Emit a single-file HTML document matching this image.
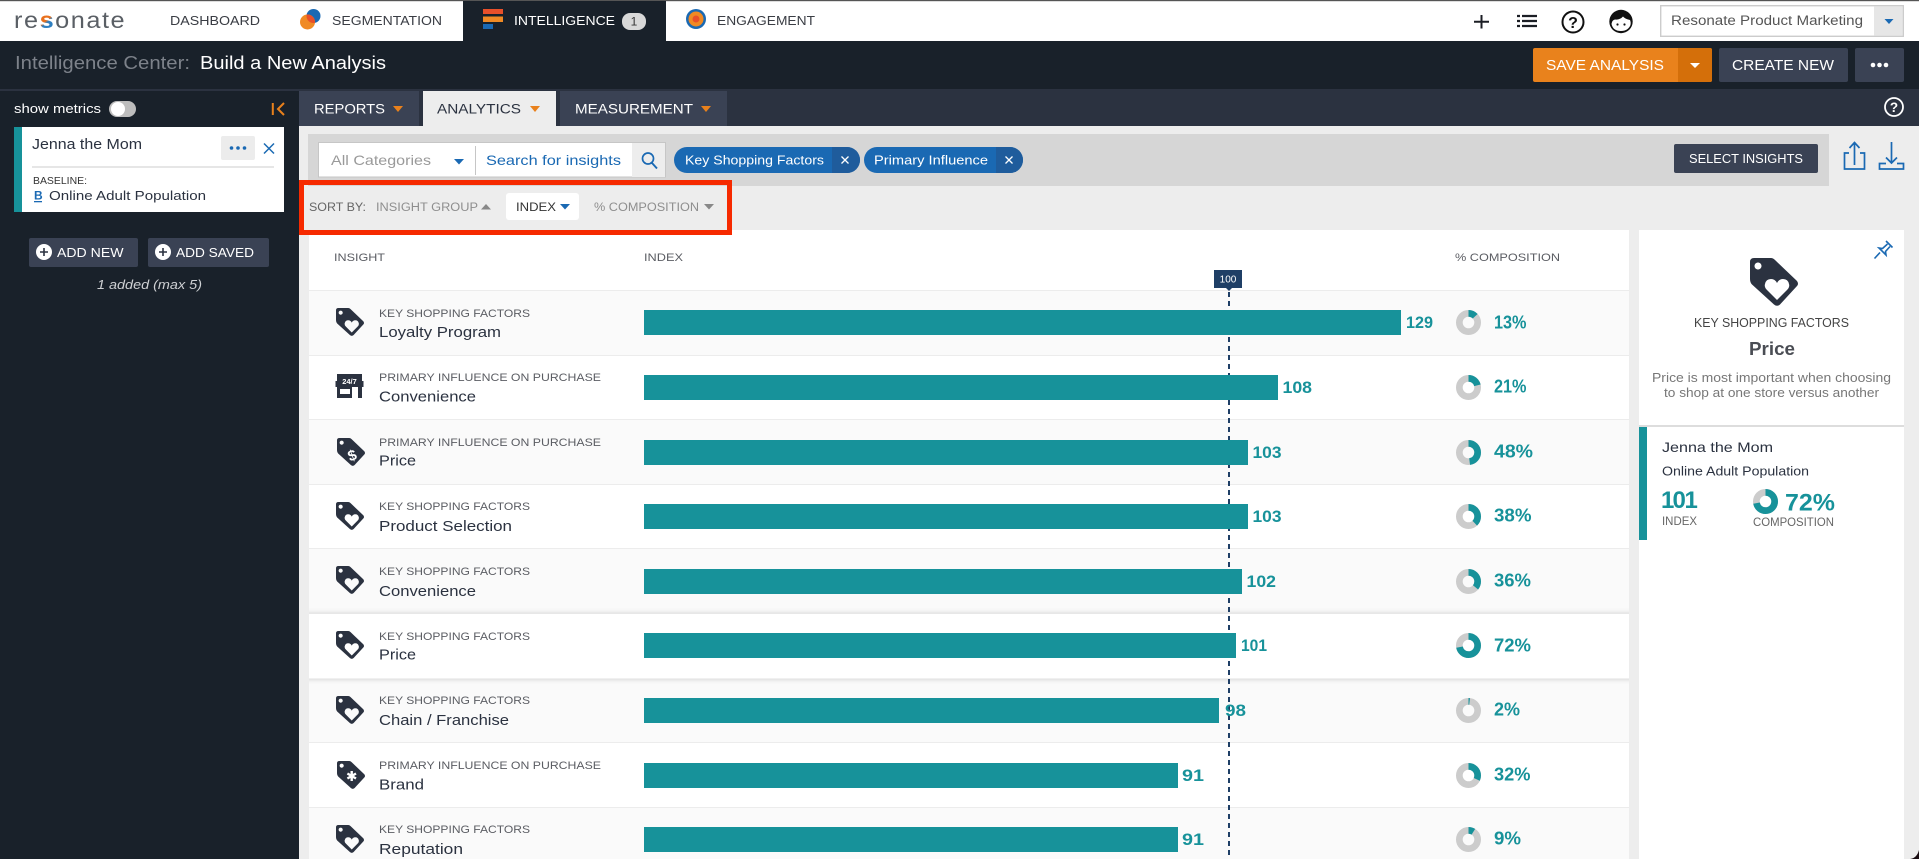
<!DOCTYPE html>
<html lang="en"><head><meta charset="utf-8"><title>Intelligence Center</title>
<style>
html,body{margin:0;padding:0;width:1919px;height:859px;overflow:hidden;background:#ededed}
svg{display:block}
text{font-family:"Liberation Sans",sans-serif}
.lb{font-size:11px;fill:#5b5d63}
.tt{font-size:14.5px;fill:#2b3240}
.v{font-size:17px;font-weight:bold;fill:#17929a}
.p{font-size:18px;font-weight:bold;fill:#17929a}
.nav{font-size:13px;fill:#3a3d44}
.tab{font-size:13.5px}
.ar{fill:#e9811c}
</style></head><body>
<svg xmlns="http://www.w3.org/2000/svg" width="1919" height="859" viewBox="0 0 1919 859">
<defs>
<linearGradient id="sg" gradientUnits="userSpaceOnUse" x1="23" y1="-12" x2="34" y2="0"><stop offset="0.45" stop-color="#e9701c"/><stop offset="0.6" stop-color="#2f7fc0"/></linearGradient>
<symbol id="tagb" viewBox="0 0 48 48"><path fill="#2b3240" fill-rule="evenodd" d="M4 0H21Q23 0 25 2L47 23Q49 26 47 28L30 46.500Q27 49 24 46.500L2 26.500Q0 24.500 0 21V4Q0 0 4 0ZM8 4.500a3.500 3.500 0 1 0 .01 0Z"/></symbol>
<symbol id="tag" viewBox="0 0 48 48"><path fill="#2b3240" fill-rule="evenodd" d="M4 0H21Q23 0 25 2L47 23Q49 26 47 28L30 46.500Q27 49 24 46.500L2 26.500Q0 24.500 0 21V4Q0 0 4 0ZM8 4.500a3.500 3.500 0 1 0 .01 0ZM27 42L17 32Q14 29 15 26Q16 21 21 21Q25 21 27 25Q29 21 33 21Q38 21 39 26Q40 29 37 32Z"/></symbol>
<clipPath id="segc"><circle cx="307.500" cy="22" r="7.500"/></clipPath>
<clipPath id="selc"><rect x="309" y="600" width="1320" height="95"/></clipPath>
</defs>

<!-- base -->
<rect width="1919" height="859" fill="#ededed"/>
<rect width="1919" height="41" fill="#fff"/>
<rect width="1919" height="1.200" fill="#555"/>
<rect y="41" width="1919" height="48" fill="#19212a"/>
<rect y="89" width="1919" height="37" fill="#2b3240"/>
<rect y="91" width="299" height="768" fill="#19212a"/>

<!-- top nav -->
<text transform="translate(14 28) scale(1.1 1)" font-size="23" letter-spacing="1.400" fill="#5a5f65">re<tspan fill="url(#sg)" font-weight="bold">s</tspan>onate</text>
<text class="nav" x="170" y="25" textLength="90" lengthAdjust="spacingAndGlyphs">DASHBOARD</text>
<circle cx="313.500" cy="16" r="7" fill="#1a69b3"/><circle cx="307.500" cy="22" r="7.500" fill="#f08a24"/><circle cx="313.500" cy="16" r="7" fill="#e8502a" clip-path="url(#segc)"/>
<text class="nav" x="332" y="25" textLength="110" lengthAdjust="spacingAndGlyphs">SEGMENTATION</text>
<rect x="463" y="1" width="203" height="40" fill="#19212a"/>
<rect x="483" y="9" width="20" height="5" fill="#e8502a"/><rect x="483" y="16.500" width="20" height="5.500" fill="#f08a24"/><rect x="483" y="24" width="10" height="5" fill="#1a69b3"/>
<text x="514" y="25" font-size="13" fill="#fff" textLength="101" lengthAdjust="spacingAndGlyphs">INTELLIGENCE</text>
<rect x="622" y="13" width="24" height="17" rx="8" fill="#d8d8d8"/><text x="634" y="25.500" font-size="12" fill="#333" text-anchor="middle">1</text>
<circle cx="696" cy="19" r="10" fill="#1a69b3"/><circle cx="696" cy="19" r="7.500" fill="#f08a24"/><circle cx="696" cy="19" r="3.500" fill="#e8502a"/>
<text class="nav" x="717" y="25" textLength="98" lengthAdjust="spacingAndGlyphs">ENGAGEMENT</text>

<path d="M1481.500 15v13.500M1474 21.700h15" stroke="#1b1e24" stroke-width="2" fill="none"/>
<path d="M1517 16h3M1522 16h15M1517 21h3M1522 21h15M1517 26h3M1522 26h15" stroke="#1b1e24" stroke-width="2.300" fill="none"/>
<circle cx="1573" cy="22" r="10.500" fill="#fff" stroke="#111" stroke-width="2"/><text x="1573" y="28" font-size="16" font-weight="bold" fill="#111" text-anchor="middle">?</text>
<circle cx="1621" cy="21.500" r="11.700" fill="#111"/>
<path d="M1611.500 24Q1612 20 1615 19.500Q1620 20 1623 16.500Q1625 19 1630 20Q1631 22 1630.500 25Q1628 31 1621 31Q1613 31 1611.500 24Z" fill="#fff"/>
<circle cx="1617.500" cy="24.500" r="1.100" fill="#111"/><circle cx="1624.500" cy="24.500" r="1.100" fill="#111"/>

<rect x="1660.700" y="5.700" width="242.600" height="30.600" fill="#fff" stroke="#ccc" stroke-width="1.400"/>
<rect x="1874" y="6.400" width="28.600" height="29.200" fill="#e6e6e6"/>
<text x="1671" y="25" font-size="13.500" fill="#555" textLength="192" lengthAdjust="spacingAndGlyphs">Resonate Product Marketing</text>
<path d="M1884.500 19h9l-4.500 5z" fill="#1a69b3"/>

<!-- header row -->
<text x="15" y="69" font-size="18" fill="#7d828a" textLength="175" lengthAdjust="spacingAndGlyphs">Intelligence Center:</text>
<text x="200" y="69" font-size="18" fill="#fff" textLength="186" lengthAdjust="spacingAndGlyphs">Build a New Analysis</text>

<rect x="1533" y="48" width="179" height="34" rx="2" fill="#e9821c"/>
<path d="M1678 48h32a2 2 0 0 1 2 2v30a2 2 0 0 1-2 2h-32z" fill="#d46f0a"/>
<text x="1546" y="70" font-size="14.500" fill="#fff" textLength="118" lengthAdjust="spacingAndGlyphs">SAVE ANALYSIS</text>
<path d="M1690 63h10l-5 5z" fill="#fff"/>
<rect x="1719" y="48" width="129" height="34" rx="2" fill="#3a4254"/>
<text x="1732" y="70" font-size="14.500" fill="#fff" textLength="102" lengthAdjust="spacingAndGlyphs">CREATE NEW</text>
<rect x="1855" y="48" width="49" height="34" rx="2" fill="#3a4254"/>
<circle cx="1873" cy="65" r="2.300" fill="#fff"/><circle cx="1879.500" cy="65" r="2.300" fill="#fff"/><circle cx="1886" cy="65" r="2.300" fill="#fff"/>

<!-- tabs -->
<rect x="299" y="91" width="120" height="35" fill="#3a4254"/>
<text class="tab" x="314" y="113.500" fill="#fff" textLength="71" lengthAdjust="spacingAndGlyphs">REPORTS</text>
<path class="ar" d="M393 106h10l-5 6z"/>
<rect x="423" y="91" width="133" height="35" fill="#ededed"/>
<text class="tab" x="437" y="113.500" fill="#2b3240" textLength="84" lengthAdjust="spacingAndGlyphs">ANALYTICS</text>
<path class="ar" d="M530 106h10l-5 6z"/>
<rect x="560" y="91" width="167" height="35" fill="#3a4254"/>
<text class="tab" x="575" y="113.500" fill="#fff" textLength="118" lengthAdjust="spacingAndGlyphs">MEASUREMENT</text>
<path class="ar" d="M701 106h10l-5 6z"/>
<circle cx="1894" cy="107" r="9" fill="none" stroke="#fff" stroke-width="1.800"/><text x="1894" y="112" font-size="13.500" font-weight="bold" fill="#fff" text-anchor="middle">?</text>

<!-- sidebar -->
<text x="14" y="113" font-size="13" fill="#fff" textLength="87" lengthAdjust="spacingAndGlyphs">show metrics</text>
<rect x="109" y="101" width="27" height="16" rx="8" fill="#bdbdbd"/><circle cx="118" cy="109" r="7" fill="#fff"/>
<path d="M272.800 103v12" stroke="#e9811c" stroke-width="2" fill="none"/><path d="M284 103l-6 6 6 6" stroke="#e9811c" stroke-width="2" fill="none"/>

<rect x="14" y="127" width="270" height="85" fill="#fff"/><rect x="14" y="127" width="8" height="85" fill="#17929a"/>
<text x="32" y="149" font-size="14.500" fill="#2b3240" textLength="110" lengthAdjust="spacingAndGlyphs">Jenna the Mom</text>
<rect x="221" y="136" width="34" height="24" rx="2" fill="#ececec"/>
<circle cx="231.500" cy="148" r="1.800" fill="#1a69b3"/><circle cx="238" cy="148" r="1.800" fill="#1a69b3"/><circle cx="244.500" cy="148" r="1.800" fill="#1a69b3"/>
<path d="M264 143.500l10 10M274 143.500l-10 10" stroke="#1a69b3" stroke-width="1.500" fill="none"/>
<rect x="32" y="166.500" width="242" height="1" fill="#ccc"/>
<text x="33" y="184" font-size="10.500" fill="#333" textLength="54" lengthAdjust="spacingAndGlyphs">BASELINE:</text>
<text x="34" y="199.500" font-size="12" font-weight="bold" fill="#1a69b3">B</text><rect x="34" y="201" width="8" height="1.300" fill="#1a69b3"/>
<text x="49" y="200" font-size="13" fill="#2b3240" textLength="157" lengthAdjust="spacingAndGlyphs">Online Adult Population</text>

<rect x="29" y="238" width="109" height="29" rx="2" fill="#3a4254"/>
<circle cx="44" cy="252" r="8" fill="#fff"/><path d="M44 248v8M40 252h8" stroke="#2b3240" stroke-width="1.600"/>
<text x="57" y="257" font-size="13" fill="#fff" textLength="66.500" lengthAdjust="spacingAndGlyphs">ADD NEW</text>
<rect x="148" y="238" width="121" height="29" rx="2" fill="#3a4254"/>
<circle cx="163" cy="252" r="8" fill="#fff"/><path d="M163 248v8M159 252h8" stroke="#2b3240" stroke-width="1.600"/>
<text x="176" y="257" font-size="13" fill="#fff" textLength="78" lengthAdjust="spacingAndGlyphs">ADD SAVED</text>
<text x="97" y="289" font-size="13" font-style="italic" fill="#cfd1d4" textLength="105" lengthAdjust="spacingAndGlyphs">1 added (max 5)</text>

<!-- filter bar -->
<rect x="308" y="134" width="1521" height="52" fill="#d6d6d6"/>
<rect x="318.500" y="142.500" width="347" height="34.500" fill="#fff" stroke="#c6c6c6"/>
<text x="331" y="165" font-size="14" fill="#9a9a9a" textLength="100" lengthAdjust="spacingAndGlyphs">All Categories</text>
<path d="M454 159h10l-5 5.500z" fill="#1a69b3"/>
<rect x="475" y="146" width="1" height="29" fill="#c6c6c6"/>
<text x="486" y="165" font-size="14" fill="#1a69b3" textLength="135" lengthAdjust="spacingAndGlyphs">Search for insights</text>
<rect x="632" y="143" width="33" height="34" fill="#ededed"/>
<circle cx="648" cy="158.500" r="5.500" fill="none" stroke="#1a69b3" stroke-width="1.700"/><path d="M652 163l5 5.500" stroke="#1a69b3" stroke-width="1.900"/>

<rect x="674" y="147" width="186" height="26" rx="13" fill="#1a69b3"/>
<path d="M832 147h15a13 13 0 0 1 0 26h-15z" fill="#1f5c9c"/>
<text x="685" y="164.500" font-size="12.500" fill="#fff" textLength="139" lengthAdjust="spacingAndGlyphs">Key Shopping Factors</text>
<path d="M841.500 156.500l7 7M848.500 156.500l-7 7" stroke="#fff" stroke-width="1.300"/>
<rect x="864" y="147" width="159" height="26" rx="13" fill="#1a69b3"/>
<path d="M996 147h14a13 13 0 0 1 0 26h-14z" fill="#1f5c9c"/>
<text x="874" y="164.500" font-size="12.500" fill="#fff" textLength="114" lengthAdjust="spacingAndGlyphs">Primary Influence</text>
<path d="M1005.500 156.500l7 7M1012.500 156.500l-7 7" stroke="#fff" stroke-width="1.300"/>

<rect x="1674" y="144" width="144" height="29" rx="2" fill="#3a4254"/>
<text x="1689" y="163" font-size="13" fill="#fff" textLength="114" lengthAdjust="spacingAndGlyphs">SELECT INSIGHTS</text>

<path d="M1849 153h-4.500v16h20v-16h-4.500M1854.500 165v-22M1849.500 148l5-5.500 5 5.500" stroke="#1a69b3" stroke-width="1.700" fill="none"/>
<path d="M1886 163.500h-6.500v5.500h24v-5.500h-6.500M1891.500 142v21M1886 157.500l5.500 5.500 5.500-5.500" stroke="#1a69b3" stroke-width="1.700" fill="none"/>

<!-- sort -->
<text x="309" y="211" font-size="11.500" fill="#666" textLength="57" lengthAdjust="spacingAndGlyphs">SORT BY:</text>
<text x="376" y="211" font-size="11.500" fill="#8e8e8e" textLength="102" lengthAdjust="spacingAndGlyphs">INSIGHT GROUP</text>
<path d="M481 209.500h10l-5-5.500z" fill="#888"/>
<rect x="506" y="193" width="73" height="27" rx="3" fill="#fff"/>
<text x="516" y="211" font-size="12" fill="#333" textLength="40" lengthAdjust="spacingAndGlyphs">INDEX</text>
<path d="M560 204h10l-5 5.500z" fill="#1a69b3"/>
<text x="594" y="211" font-size="11.500" fill="#8e8e8e" textLength="105" lengthAdjust="spacingAndGlyphs">% COMPOSITION</text>
<path d="M704 204h10l-5 5.500z" fill="#888"/>

<!-- table -->
<rect x="309" y="230" width="1320" height="629" fill="#fff"/>
<text class="lb" x="334" y="261" textLength="51" lengthAdjust="spacingAndGlyphs">INSIGHT</text>
<text class="lb" x="644" y="261" textLength="39" lengthAdjust="spacingAndGlyphs">INDEX</text>
<text class="lb" x="1455" y="261" textLength="105" lengthAdjust="spacingAndGlyphs">% COMPOSITION</text>

<rect x="309" y="290" width="1320" height="65" fill="#fafafa"/>
<rect x="309" y="419" width="1320" height="65" fill="#fafafa"/>
<rect x="309" y="548" width="1320" height="65" fill="#fafafa"/>
<rect x="309" y="678" width="1320" height="65" fill="#fafafa"/>
<rect x="309" y="807" width="1320" height="52" fill="#fafafa"/>
<g fill="#ececec">
<rect x="309" y="290" width="1320" height="1"/><rect x="309" y="355" width="1320" height="1"/><rect x="309" y="419" width="1320" height="1"/><rect x="309" y="484" width="1320" height="1"/><rect x="309" y="548" width="1320" height="1"/><rect x="309" y="742" width="1320" height="1"/><rect x="309" y="807" width="1320" height="1"/>
</g>
<g clip-path="url(#selc)"><rect x="300" y="614" width="1340" height="64.500" fill="#fff" style="filter:drop-shadow(0 0 3px rgba(0,0,0,.22))"/></g>

<path d="M1229 292V859" stroke="#1f3f66" stroke-width="2" stroke-dasharray="5 4" fill="none"/>
<rect x="1214" y="270" width="28" height="18" fill="#1f3f66"/><path d="M1226 288h6l-3 3z" fill="#1f3f66"/>
<text x="1228" y="282.500" font-size="10" fill="#fff" text-anchor="middle">100</text>

<!-- row 1 -->
<use href="#tag" x="336" y="308" width="28" height="28"/>
<text class="lb" x="379" y="317" textLength="151" lengthAdjust="spacingAndGlyphs">KEY SHOPPING FACTORS</text>
<text class="tt" x="379" y="337" textLength="122" lengthAdjust="spacingAndGlyphs">Loyalty Program</text>
<rect x="644" y="310" width="757" height="25" fill="#17929a"/>
<text class="v" x="1406" y="328" textLength="27" lengthAdjust="spacingAndGlyphs">129</text>
<!-- row 2 -->
<rect x="337" y="374" width="25" height="12" fill="#2b3240"/><rect x="335.500" y="381" width="28" height="6" fill="#2b3240"/><rect x="337" y="386" width="25" height="12" fill="#2b3240"/>
<rect x="340" y="389" width="10" height="5" fill="#fff"/><rect x="352" y="387" width="6" height="11" fill="#fff"/>
<text x="349.500" y="384" font-size="7.500" font-weight="bold" fill="#fff" text-anchor="middle">24/7</text>
<text class="lb" x="379" y="381" textLength="222" lengthAdjust="spacingAndGlyphs">PRIMARY INFLUENCE ON PURCHASE</text>
<text class="tt" x="379" y="401.500" textLength="97" lengthAdjust="spacingAndGlyphs">Convenience</text>
<rect x="644" y="375" width="634" height="25" fill="#17929a"/>
<text class="v" x="1282.500" y="393" textLength="29.500" lengthAdjust="spacingAndGlyphs">108</text>
<!-- row 3 -->
<use href="#tagb" x="337" y="438" width="28" height="28"/>
<text x="352" y="460.500" font-size="15" font-weight="bold" fill="#fff" text-anchor="middle" transform="rotate(-20 352 455)">$</text>
<text class="lb" x="379" y="446" textLength="222" lengthAdjust="spacingAndGlyphs">PRIMARY INFLUENCE ON PURCHASE</text>
<text class="tt" x="379" y="465.500" textLength="37" lengthAdjust="spacingAndGlyphs">Price</text>
<rect x="644" y="440" width="604" height="25" fill="#17929a"/>
<text class="v" x="1252.500" y="458" textLength="29" lengthAdjust="spacingAndGlyphs">103</text>
<!-- row 4 -->
<use href="#tag" x="336" y="502" width="28" height="28"/>
<text class="lb" x="379" y="510" textLength="151" lengthAdjust="spacingAndGlyphs">KEY SHOPPING FACTORS</text>
<text class="tt" x="379" y="531" textLength="133" lengthAdjust="spacingAndGlyphs">Product Selection</text>
<rect x="644" y="504" width="604" height="25" fill="#17929a"/>
<text class="v" x="1252.500" y="522" textLength="29" lengthAdjust="spacingAndGlyphs">103</text>
<!-- row 5 -->
<use href="#tag" x="336" y="566" width="28" height="28"/>
<text class="lb" x="379" y="575" textLength="151" lengthAdjust="spacingAndGlyphs">KEY SHOPPING FACTORS</text>
<text class="tt" x="379" y="596" textLength="97" lengthAdjust="spacingAndGlyphs">Convenience</text>
<rect x="644" y="569" width="598" height="25" fill="#17929a"/>
<text class="v" x="1246.500" y="587" textLength="29.500" lengthAdjust="spacingAndGlyphs">102</text>
<!-- row 6 -->
<use href="#tag" x="336" y="631" width="28" height="28"/>
<text class="lb" x="379" y="640" textLength="151" lengthAdjust="spacingAndGlyphs">KEY SHOPPING FACTORS</text>
<text class="tt" x="379" y="659.500" textLength="37" lengthAdjust="spacingAndGlyphs">Price</text>
<rect x="644" y="633" width="592" height="25" fill="#17929a"/>
<text class="v" x="1241" y="651" textLength="26" lengthAdjust="spacingAndGlyphs">101</text>
<!-- row 7 -->
<use href="#tag" x="336" y="696" width="28" height="28"/>
<text class="lb" x="379" y="704" textLength="151" lengthAdjust="spacingAndGlyphs">KEY SHOPPING FACTORS</text>
<text class="tt" x="379" y="725" textLength="130" lengthAdjust="spacingAndGlyphs">Chain / Franchise</text>
<rect x="644" y="698" width="575" height="25" fill="#17929a"/>
<text class="v" x="1225" y="716" textLength="21" lengthAdjust="spacingAndGlyphs">98</text>
<!-- row 8 -->
<use href="#tagb" x="337" y="761" width="28" height="28"/>
<path d="M351.700 771v10M347.400 773.500l8.600 5M347.400 778.500l8.600-5" stroke="#fff" stroke-width="2.400" fill="none"/>
<text class="lb" x="379" y="769" textLength="222" lengthAdjust="spacingAndGlyphs">PRIMARY INFLUENCE ON PURCHASE</text>
<text class="tt" x="379" y="789.500" textLength="45" lengthAdjust="spacingAndGlyphs">Brand</text>
<rect x="644" y="763" width="534" height="25" fill="#17929a"/>
<text class="v" x="1182" y="781" textLength="22" lengthAdjust="spacingAndGlyphs">91</text>
<!-- row 9 -->
<use href="#tag" x="336" y="825" width="28" height="28"/>
<text class="lb" x="379" y="833" textLength="151" lengthAdjust="spacingAndGlyphs">KEY SHOPPING FACTORS</text>
<text class="tt" x="379" y="854" textLength="84" lengthAdjust="spacingAndGlyphs">Reputation</text>
<rect x="644" y="827" width="534" height="25" fill="#17929a"/>
<text class="v" x="1182" y="845" textLength="22" lengthAdjust="spacingAndGlyphs">91</text>

<!-- donuts -->
<g fill="none" stroke-width="6.700">
<circle cx="1468.500" cy="322.500" r="9.150" stroke="#ccc"/><circle cx="1468.500" cy="322.500" r="9.150" stroke="#17929a" pathLength="100" stroke-dasharray="13 87" transform="rotate(-90 1468.500 322.500)"/>
<circle cx="1468.500" cy="387.500" r="9.150" stroke="#ccc"/><circle cx="1468.500" cy="387.500" r="9.150" stroke="#17929a" pathLength="100" stroke-dasharray="21 79" transform="rotate(-90 1468.500 387.500)"/>
<circle cx="1468.500" cy="452.500" r="9.150" stroke="#ccc"/><circle cx="1468.500" cy="452.500" r="9.150" stroke="#17929a" pathLength="100" stroke-dasharray="48 52" transform="rotate(-90 1468.500 452.500)"/>
<circle cx="1468.500" cy="516.500" r="9.150" stroke="#ccc"/><circle cx="1468.500" cy="516.500" r="9.150" stroke="#17929a" pathLength="100" stroke-dasharray="38 62" transform="rotate(-90 1468.500 516.500)"/>
<circle cx="1468.500" cy="581.500" r="9.150" stroke="#ccc"/><circle cx="1468.500" cy="581.500" r="9.150" stroke="#17929a" pathLength="100" stroke-dasharray="36 64" transform="rotate(-90 1468.500 581.500)"/>
<circle cx="1468.500" cy="645.500" r="9.150" stroke="#ccc"/><circle cx="1468.500" cy="645.500" r="9.150" stroke="#17929a" pathLength="100" stroke-dasharray="72 28" transform="rotate(-90 1468.500 645.500)"/>
<circle cx="1468.500" cy="710.500" r="9.150" stroke="#ccc"/><circle cx="1468.500" cy="710.500" r="9.150" stroke="#17929a" pathLength="100" stroke-dasharray="2 98" transform="rotate(-90 1468.500 710.500)"/>
<circle cx="1468.500" cy="775.500" r="9.150" stroke="#ccc"/><circle cx="1468.500" cy="775.500" r="9.150" stroke="#17929a" pathLength="100" stroke-dasharray="32 68" transform="rotate(-90 1468.500 775.500)"/>
<circle cx="1468.500" cy="839.500" r="9.150" stroke="#ccc"/><circle cx="1468.500" cy="839.500" r="9.150" stroke="#17929a" pathLength="100" stroke-dasharray="9 91" transform="rotate(-90 1468.500 839.500)"/>
</g>
<text class="p" x="1494" y="328.500" textLength="32.500" lengthAdjust="spacingAndGlyphs">13%</text>
<text class="p" x="1494" y="392.500" textLength="32.500" lengthAdjust="spacingAndGlyphs">21%</text>
<text class="p" x="1494" y="457.500" textLength="39" lengthAdjust="spacingAndGlyphs">48%</text>
<text class="p" x="1494" y="521.500" textLength="37.500" lengthAdjust="spacingAndGlyphs">38%</text>
<text class="p" x="1494" y="586.500" textLength="37" lengthAdjust="spacingAndGlyphs">36%</text>
<text class="p" x="1494" y="651.500" textLength="37" lengthAdjust="spacingAndGlyphs">72%</text>
<text class="p" x="1494" y="715.500" textLength="26" lengthAdjust="spacingAndGlyphs">2%</text>
<text class="p" x="1494" y="780.500" textLength="36.500" lengthAdjust="spacingAndGlyphs">32%</text>
<text class="p" x="1494" y="844.500" textLength="27" lengthAdjust="spacingAndGlyphs">9%</text>

<!-- right panel -->
<rect x="1639" y="230" width="265" height="629" fill="#fff"/>
<path d="M1886 241l6.500 6.500M1887.500 244l-5 4.500-3.500-.5 7 7-.5-3.500 4.500-5M1880 252.500l-5.500 6" stroke="#1a69b3" stroke-width="1.600" fill="none"/>
<use href="#tag" x="1750" y="258" width="48" height="48"/>
<text x="1694" y="327" font-size="12.500" fill="#444" textLength="155" lengthAdjust="spacingAndGlyphs">KEY SHOPPING FACTORS</text>
<text x="1749" y="355" font-size="18" font-weight="bold" fill="#4a4d54" textLength="46" lengthAdjust="spacingAndGlyphs">Price</text>
<text x="1652" y="382" font-size="12.500" fill="#777" textLength="239" lengthAdjust="spacingAndGlyphs">Price is most important when choosing</text>
<text x="1664" y="397" font-size="12.500" fill="#777" textLength="215" lengthAdjust="spacingAndGlyphs">to shop at one store versus another</text>
<rect x="1639" y="425" width="265" height="2" fill="#ddd"/>
<rect x="1639" y="427" width="8" height="113" fill="#17929a"/>
<text x="1662" y="452" font-size="14" fill="#2b3240" textLength="111" lengthAdjust="spacingAndGlyphs">Jenna the Mom</text>
<text x="1662" y="475.500" font-size="12.500" fill="#2b3240" textLength="147" lengthAdjust="spacingAndGlyphs">Online Adult Population</text>
<text x="1661 1672.500 1684.500" y="508" font-size="24" font-weight="bold" fill="#17929a">101</text>
<text x="1662" y="525" font-size="11.500" fill="#666" textLength="35" lengthAdjust="spacingAndGlyphs">INDEX</text>
<circle cx="1765.500" cy="501.500" r="9.150" fill="none" stroke="#ccc" stroke-width="6.700"/>
<circle cx="1765.500" cy="501.500" r="9.150" fill="none" stroke="#17929a" stroke-width="6.700" pathLength="100" stroke-dasharray="72 28" transform="rotate(-90 1765.500 501.500)"/>
<text x="1785" y="510.500" font-size="24" font-weight="bold" fill="#17929a" textLength="50" lengthAdjust="spacingAndGlyphs">72%</text>
<text x="1753" y="526" font-size="11.500" fill="#666" textLength="81" lengthAdjust="spacingAndGlyphs">COMPOSITION</text>

<!-- red annotation -->
<rect x="301.500" y="182.500" width="428" height="50" fill="none" stroke="#f62a00" stroke-width="5"/>

<!-- window corner -->
<path d="M1919 850v9h-9q7-1 9-9z" fill="#1a0d12"/>
</svg>
</body></html>
